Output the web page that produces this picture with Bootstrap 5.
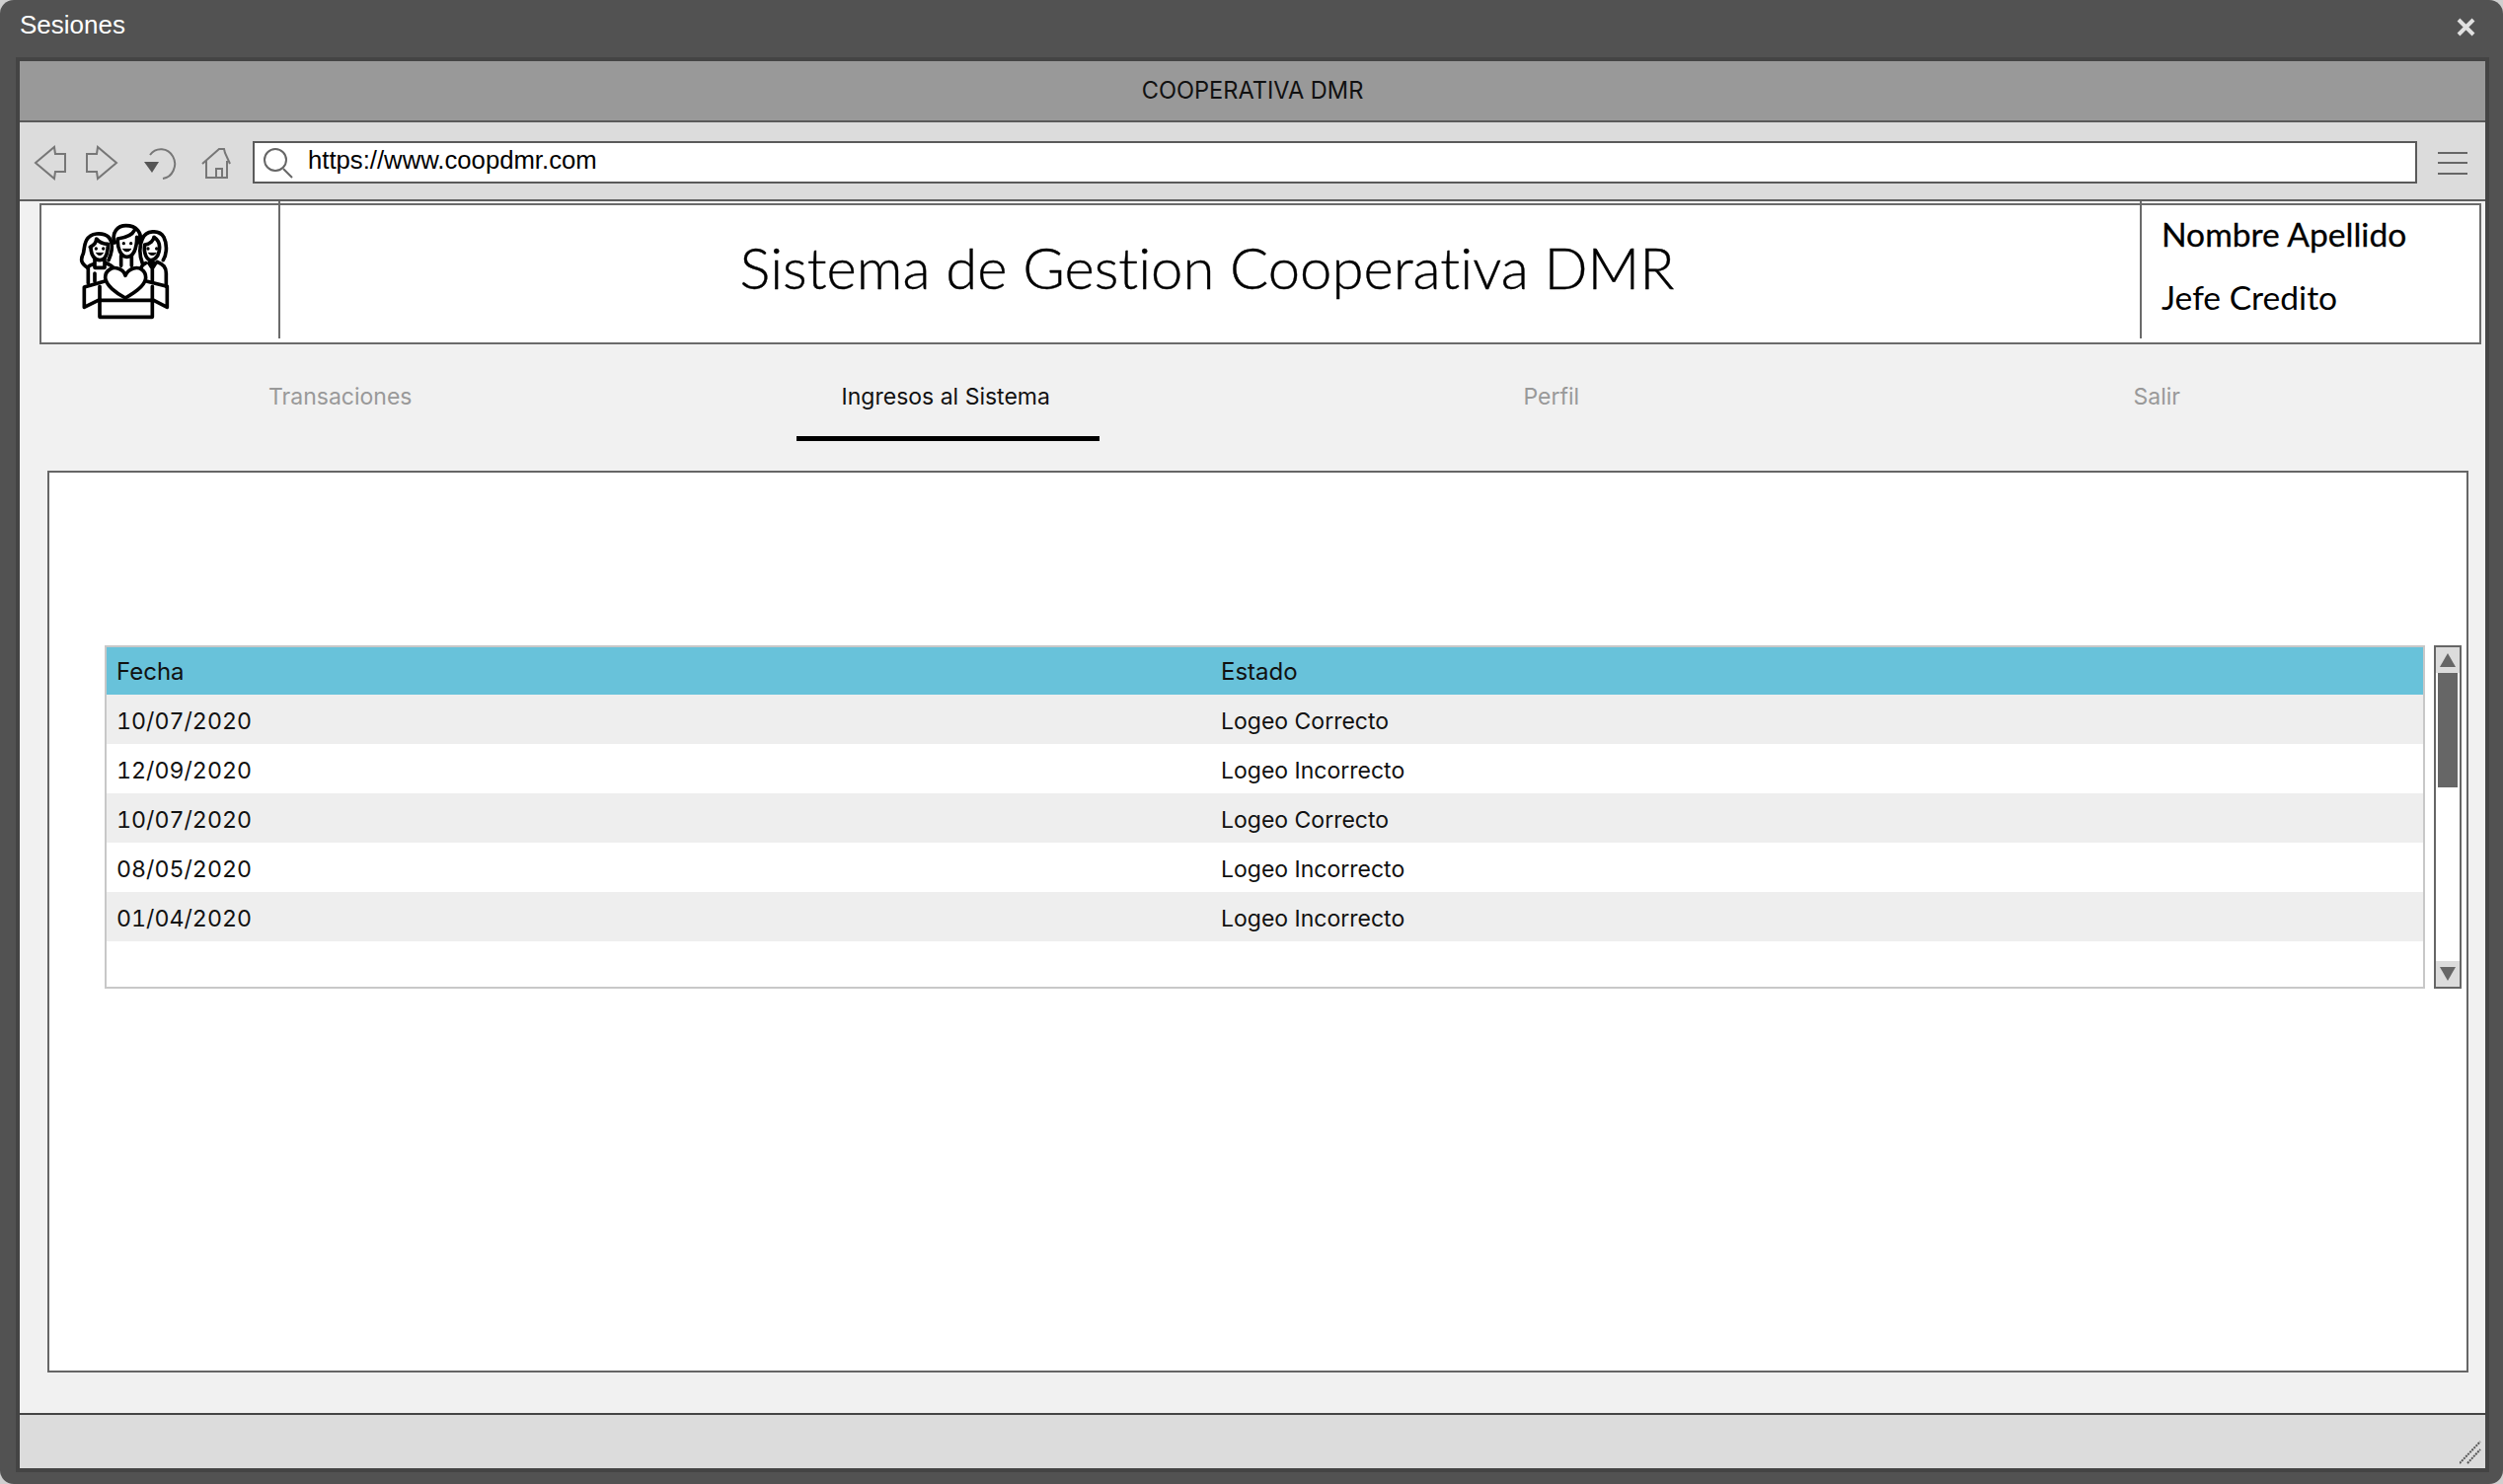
<!DOCTYPE html>
<html lang="es">
<head>
    <meta charset="UTF-8">
    <meta name="viewport" content="width=device-width, initial-scale=1.0">
    <title>Sesiones</title>
    <link rel="stylesheet" href="https://cdn.jsdelivr.net/npm/bootstrap@5.3.0/dist/css/bootstrap.min.css">
    <style>
        body { background: #cfcfcf; font-family: "Inter", "Liberation Sans", sans-serif; color: #111; }
        .ventana { height: 1504px; background: #525252; border-radius: 14px; padding: 0 14px 12px 16px; }
        .ventana-titulo { height: 58px; color: #fff; font: 26px "Liberation Sans", sans-serif; padding-left: 4px; padding-bottom: 8px; }
        .ventana-cerrar { margin-right: 14px; margin-top: 4px; }
        .ventana-cuerpo { border: 4px solid #444; background: #f1f1f1; min-height: 0; }

        .barra-titulo { height: 62px; background: #999; border-bottom: 2px solid #5a5a5a; font-size: 23.6px; }
        .barra-nav { height: 80px; background: #dcdcdc; border-bottom: 2px solid #5f5f5f; padding: 19px 18px 16px 10px; }
        .caja-url { height: 43px; margin-left: 13px; margin-right: 21px; background: #fff; border: 2px solid #5a5a5a; font: 25.7px "Liberation Sans", sans-serif; color: #000; }
        .caja-url svg { margin-left: 8px; margin-right: 14px; }
        .caja-url span { padding-bottom: 4px; }

        .cabecera { height: 143px; margin: 2px 4px 0 20px; background: #fff; border: 2px solid #6b6b6b; }
        .cab-logo { width: 242px; height: 139px; margin-top: -4px; border-right: 2px solid #6b6b6b; padding: 18px 0 0 34px; }
        .cab-titulo { height: 139px; margin-top: -4px; font: 300 58px "Lato", sans-serif; font-variant-ligatures: none; -webkit-text-stroke: 0.4px #000; color: #000; padding: 0 6px 7px 0; }
        .cab-usuario { width: 344px; height: 139px; margin-top: -4px; border-left: 2px solid #6b6b6b; padding: 11px 0 0 20px; font-family: "Lato", sans-serif; font-size: 33.6px; line-height: 44px; font-variant-ligatures: none; color: #000; }
        .cab-usuario div:first-child { -webkit-text-stroke: 0.3px #000; margin-bottom: 20px; }

        .pestanas { margin: 0 26px 0 18px; height: 128px; padding-top: 22px; }
        .pestana { display: block; width: 307px; height: 76px; margin: 0 auto; padding: 14px 0 0 0; text-align: center; font-size: 23px; color: #999; text-decoration: none; }
        .pestana.activa { color: #111; border-bottom: 5px solid #000; margin-left: calc(50% - 151px); padding-right: 5px; }

        .panel-datos { margin: 0 17px 41px 28px; background: #fff; border: 2px solid #666; padding: 175px 5px 0 56px; }
        .tabla-caja { height: 348px; border: 2px solid #c8c8c8; }
        .tabla-datos { width: 100%; table-layout: fixed; font-size: 23px; color: #111; }
        .tabla-datos th { height: 48px; background: #68c2da; font-size: 24px; font-weight: 400; padding: 2px 0 0 10px; vertical-align: middle; }
        .tabla-datos td { height: 50px; padding: 4px 0 0 10px; vertical-align: middle; }
        .tabla-datos td:first-child { font-size: 23.2px; font-variant-numeric: tabular-nums; }
        .tabla-datos tbody tr:nth-child(odd) td { background: #eee; }
        .col-fecha { width: 1119px; }

        .scroll-barra { width: 28px; height: 348px; margin-left: 9px; border: 2px solid #666; }
        .scroll-btn { height: 26px; background: #dcdcdc; }
        .scroll-pista { padding: 0 2px; }
        .scroll-pulgar { height: 116px; background: #666; }

        .barra-estado { height: 56px; background: #dcdcdc; border-top: 2px solid #444; padding: 0 4px 4px 0; }
    </style>
</head>
<body>

<div class="ventana d-flex flex-column">
    <div class="ventana-titulo d-flex justify-content-between align-items-center">
        <span>Sesiones</span>
        <svg class="ventana-cerrar" width="19" height="19" viewBox="0 0 19 19"><path d="M2 2 L17 17 M17 2 L2 17" stroke="#e0e0e0" stroke-width="4"/></svg>
    </div>

    <div class="ventana-cuerpo flex-grow-1 d-flex flex-column">
        <div class="barra-titulo d-flex justify-content-center align-items-center">COOPERATIVA DMR</div>

        <div class="barra-nav d-flex align-items-center">
            <!-- flechas, recargar y casa -->
            <svg width="213" height="44" viewBox="30 142 213 44" fill="none" stroke="#777" stroke-width="2">
                <path d="M36 164 L55 148 L56 155 L66 155 L66 173 L56 173 L55 180 Z"/>
                <path d="M118 164 L99 148 L98 155 L88 155 L88 173 L98 173 L99 180 Z"/>
                <path d="M152 156 A14 15 0 1 1 165 180"/>
                <path d="M146 163 L161 163 L154 174 Z" fill="#555" stroke="none"/>
                <path d="M205 165 L222 150 L227 150 L228 154 L233 165 M209 162 L209 179 L230 179 L230 162 M219 179 L219 170 L225 170 L225 179"/>
            </svg>
            <div class="caja-url flex-grow-1 d-flex align-items-center">
                <svg width="32" height="34" viewBox="0 0 32 34" fill="none" stroke="#666" stroke-width="2"><circle cx="13" cy="14" r="11"/><path d="M21 23 L30 32"/></svg>
                <span>https://www.coopdmr.com</span>
            </div>
            <svg width="30" height="26" viewBox="0 0 30 26" stroke="#666" stroke-width="2"><path d="M0 3 H30 M0 13 H30 M0 24 H30"/></svg>
        </div>

        <div class="cabecera d-flex">
            <div class="cab-logo flex-shrink-0">
                <svg width="104" height="106" viewBox="0 0 312 318" fill="none" stroke="#000" stroke-width="11" stroke-linejoin="round" stroke-linecap="round">
                    <!-- persona izquierda -->
                    <path d="M38 148 C20 135 15 125 25 105 C30 90 25 50 65 45 C100 42 112 60 112 85 C112 100 108 112 102 125"/>
                    <path d="M46 85 C60 78 65 68 65 60 C75 72 90 76 100 76 M48 85 C48 110 60 125 75 125 C92 125 100 105 100 76"/>
                    <path d="M60 124 L60 148 L90 148 L90 124 M38 148 C42 142 52 138 60 136 M90 132 C100 136 114 142 118 150 M40 148 L40 195 M60 165 L60 190"/>
                    <path d="M65 104 Q75 116 85 104 Z" fill="#000" stroke-width="3"/>
                    <circle cx="64" cy="90" r="5" fill="#000" stroke="none"/><circle cx="86" cy="90" r="5" fill="#000" stroke="none"/>
                    <!-- persona central -->
                    <path d="M120 72 C110 40 130 20 155 20 C185 20 207 40 196 72 M130 60 C155 56 175 46 180 35 M130 60 C128 90 140 115 158 115 C175 115 188 95 188 55"/>
                    <path d="M140 112 L140 142 M172 112 L172 142"/>
                    <path d="M146 92 Q158 106 170 92 Z" fill="#000" stroke-width="3"/>
                    <circle cx="148" cy="74" r="5" fill="#000" stroke="none"/><circle cx="170" cy="74" r="5" fill="#000" stroke="none"/>
                    <!-- persona derecha -->
                    <path d="M205 135 C195 110 195 80 205 60 C215 35 255 30 270 55 C280 75 280 105 268 125"/>
                    <path d="M212 78 C228 76 240 64 240 55 C255 65 260 80 255 100 C252 115 240 125 232 125 C218 125 208 105 212 78"/>
                    <path d="M225 134 L235 150 L245 134 Z M235 150 L235 190 M215 134 C207 138 202 144 200 150 M250 130 C268 138 277 146 277 165 L277 205"/>
                    <path d="M224 104 Q235 116 246 104 Z" fill="#000" stroke-width="3"/>
                    <circle cx="222" cy="90" r="5" fill="#000" stroke="none"/><circle cx="248" cy="90" r="5" fill="#000" stroke="none"/>
                    <!-- caja -->
                    <path d="M75 245 L28 268 L28 207 L88 190 M235 245 L280 268 L280 205 L220 190"/>
                    <path d="M75 245 L75 205 M235 245 L235 205"/>
                    <!-- corazon -->
                    <path d="M153 240 C125 225 92 200 92 178 C92 155 115 145 130 150 C140 153 150 160 153 172 C158 160 168 153 178 150 C195 145 215 155 215 178 C215 200 180 225 153 240 Z" fill="#fff"/>
                    <path d="M75 247 H235 V298 H75 Z" stroke-linecap="butt"/>
                </svg>
            </div>
            <div class="cab-titulo flex-grow-1 d-flex justify-content-center align-items-center">Sistema de Gestion Cooperativa DMR</div>
            <div class="cab-usuario flex-shrink-0">
                <div>Nombre Apellido</div>
                <div>Jefe Credito</div>
            </div>
        </div>

        <ul class="nav nav-justified pestanas">
            <li class="nav-item"><a class="pestana" href="#">Transaciones</a></li>
            <li class="nav-item"><a class="pestana activa" href="#">Ingresos al Sistema</a></li>
            <li class="nav-item"><a class="pestana" href="#">Perfil</a></li>
            <li class="nav-item"><a class="pestana" href="#">Salir</a></li>
        </ul>

        <div class="panel-datos flex-grow-1 d-flex align-items-start">
            <div class="tabla-caja flex-grow-1">
                <table class="tabla-datos">
                    <thead>
                        <tr><th class="col-fecha">Fecha</th><th>Estado</th></tr>
                    </thead>
                    <tbody>
                        <tr><td>10/07/2020</td><td>Logeo Correcto</td></tr>
                        <tr><td>12/09/2020</td><td>Logeo Incorrecto</td></tr>
                        <tr><td>10/07/2020</td><td>Logeo Correcto</td></tr>
                        <tr><td>08/05/2020</td><td>Logeo Incorrecto</td></tr>
                        <tr><td>01/04/2020</td><td>Logeo Incorrecto</td></tr>
                    </tbody>
                </table>
            </div>
            <div class="scroll-barra d-flex flex-column flex-shrink-0">
                <div class="scroll-btn d-flex justify-content-center align-items-center"><svg width="16" height="14" viewBox="0 0 16 14"><path d="M8 0 L16 14 L0 14 Z" fill="#666"/></svg></div>
                <div class="scroll-pista flex-grow-1"><div class="scroll-pulgar"></div></div>
                <div class="scroll-btn d-flex justify-content-center align-items-center"><svg width="16" height="14" viewBox="0 0 16 14"><path d="M0 0 L16 0 L8 14 Z" fill="#666"/></svg></div>
            </div>
        </div>

        <div class="barra-estado d-flex justify-content-end align-items-end">
            <svg width="22" height="24" viewBox="0 0 22 24" stroke="#555" stroke-width="2" stroke-dasharray="2 1"><path d="M0 23 L21 1 M8 23 L21 9"/></svg>
        </div>
    </div>
</div>

</body>
</html>
